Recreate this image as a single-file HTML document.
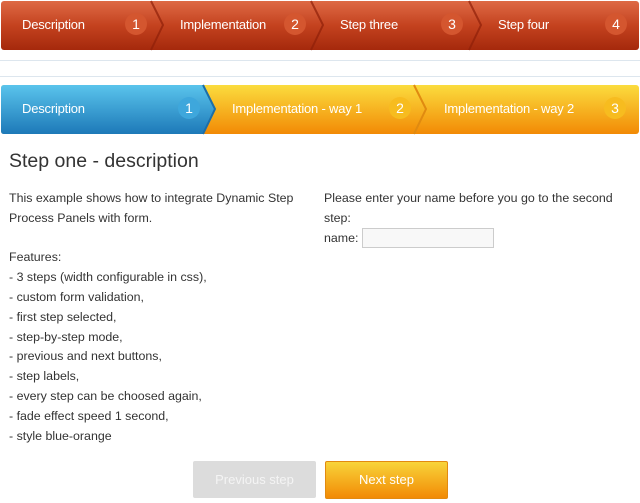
<!DOCTYPE html>
<html><head><style>
body{margin:0;width:640px;height:503px;background:#fff;font-family:"Liberation Sans",sans-serif;position:relative;overflow:hidden}
.t{position:absolute;color:#fff;font-size:13px;letter-spacing:-0.2px}
.n{position:absolute;width:22px;height:22px;border-radius:50%;color:#fff;font-size:14px;text-align:center;line-height:22px}
.p{position:absolute;font-size:12.4px;color:#333;line-height:19.8px}
</style></head><body>
<svg width="640" height="140" style="position:absolute;left:0;top:0">
<defs>
<linearGradient id="r" x1="0" y1="0" x2="0" y2="1"><stop offset="0" stop-color="#de6a45"/><stop offset=".5" stop-color="#c4421f"/><stop offset="1" stop-color="#a5290c"/></linearGradient>
<linearGradient id="b" x1="0" y1="0" x2="0" y2="1"><stop offset="0" stop-color="#5ac4ec"/><stop offset="1" stop-color="#1d79b8"/></linearGradient>
<linearGradient id="o" x1="0" y1="0" x2="0" y2="1"><stop offset="0" stop-color="#fbdc3e"/><stop offset="1" stop-color="#f28a05"/></linearGradient>
</defs>
<rect x="1" y="1" width="638" height="49" rx="3" fill="url(#r)"/>
<g fill="none" stroke="#8e2008" stroke-width="2" opacity=".7">
<polyline points="151,1 163,25 151,50"/><polyline points="311,1 323,25 311,50"/><polyline points="469,1 481,25 469,50"/></g>
<line x1="0" y1="60.5" x2="640" y2="60.5" stroke="#dde6ee"/>
<line x1="0" y1="76.5" x2="640" y2="76.5" stroke="#dde6ee"/>
<rect x="1" y="85" width="638" height="49" rx="3" fill="url(#o)"/>
<path d="M4,85 H203 L215,109 L203,134 H4 Q1,134 1,131 V88 Q1,85 4,85Z" fill="url(#b)"/>
<polyline points="203,85 215,109 203,134" fill="none" stroke="#1d6ea8" stroke-width="2"/>
<polyline points="414,85 426,109 414,134" fill="none" stroke="#e08a10" stroke-width="2"/>
</svg>
<div class="t" style="left:22px;top:17px">Description</div><div class="n" style="left:125px;top:13px;background:#d4562f">1</div>
<div class="t" style="left:180px;top:17px">Implementation</div><div class="n" style="left:284px;top:13px;background:#d4562f">2</div>
<div class="t" style="left:340px;top:17px">Step three</div><div class="n" style="left:441px;top:13px;background:#d4562f">3</div>
<div class="t" style="left:498px;top:17px">Step four</div><div class="n" style="left:605px;top:13px;background:#d4562f">4</div>
<div class="t" style="left:22px;top:101px">Description</div><div class="n" style="left:178px;top:97px;background:#3ea7dc">1</div>
<div class="t" style="left:232px;top:101px">Implementation - way 1</div><div class="n" style="left:389px;top:97px;background:#f7bc1f">2</div>
<div class="t" style="left:444px;top:101px">Implementation - way 2</div><div class="n" style="left:604px;top:97px;background:#f7bc1f">3</div>
<div style="position:absolute;left:9px;top:150px;font-size:19.5px;color:#333">Step one - description</div>
<div class="p" style="left:9px;top:189px">This example shows how to integrate Dynamic Step<br>Process Panels with form.<br><br>Features:<br>- 3 steps (width configurable in css),<br>- custom form validation,<br>- first step selected,<br>- step-by-step mode,<br>- previous and next buttons,<br>- step labels,<br>- every step can be choosed again,<br>- fade effect speed 1 second,<br>- style blue-orange</div>
<div class="p" style="left:324px;top:189px">Please enter your name before you go to the second<br>step:<br>name:</div>
<div style="position:absolute;left:362px;top:228px;width:130px;height:18px;border:1px solid #ccc;background:#f8f8f8"></div>
<div style="position:absolute;left:193px;top:461px;width:123px;height:37px;border-radius:2px;background:#dcdcdc;color:#f4f4f4;font-size:13px;text-align:center;line-height:37px">Previous step</div>
<div style="position:absolute;left:325px;top:461px;width:121px;height:36px;border:1px solid #e28a10;border-radius:2px;background:linear-gradient(#f8d43a,#f28a05);color:#fff;font-size:13px;text-align:center;line-height:36px">Next step</div>
</body></html>
